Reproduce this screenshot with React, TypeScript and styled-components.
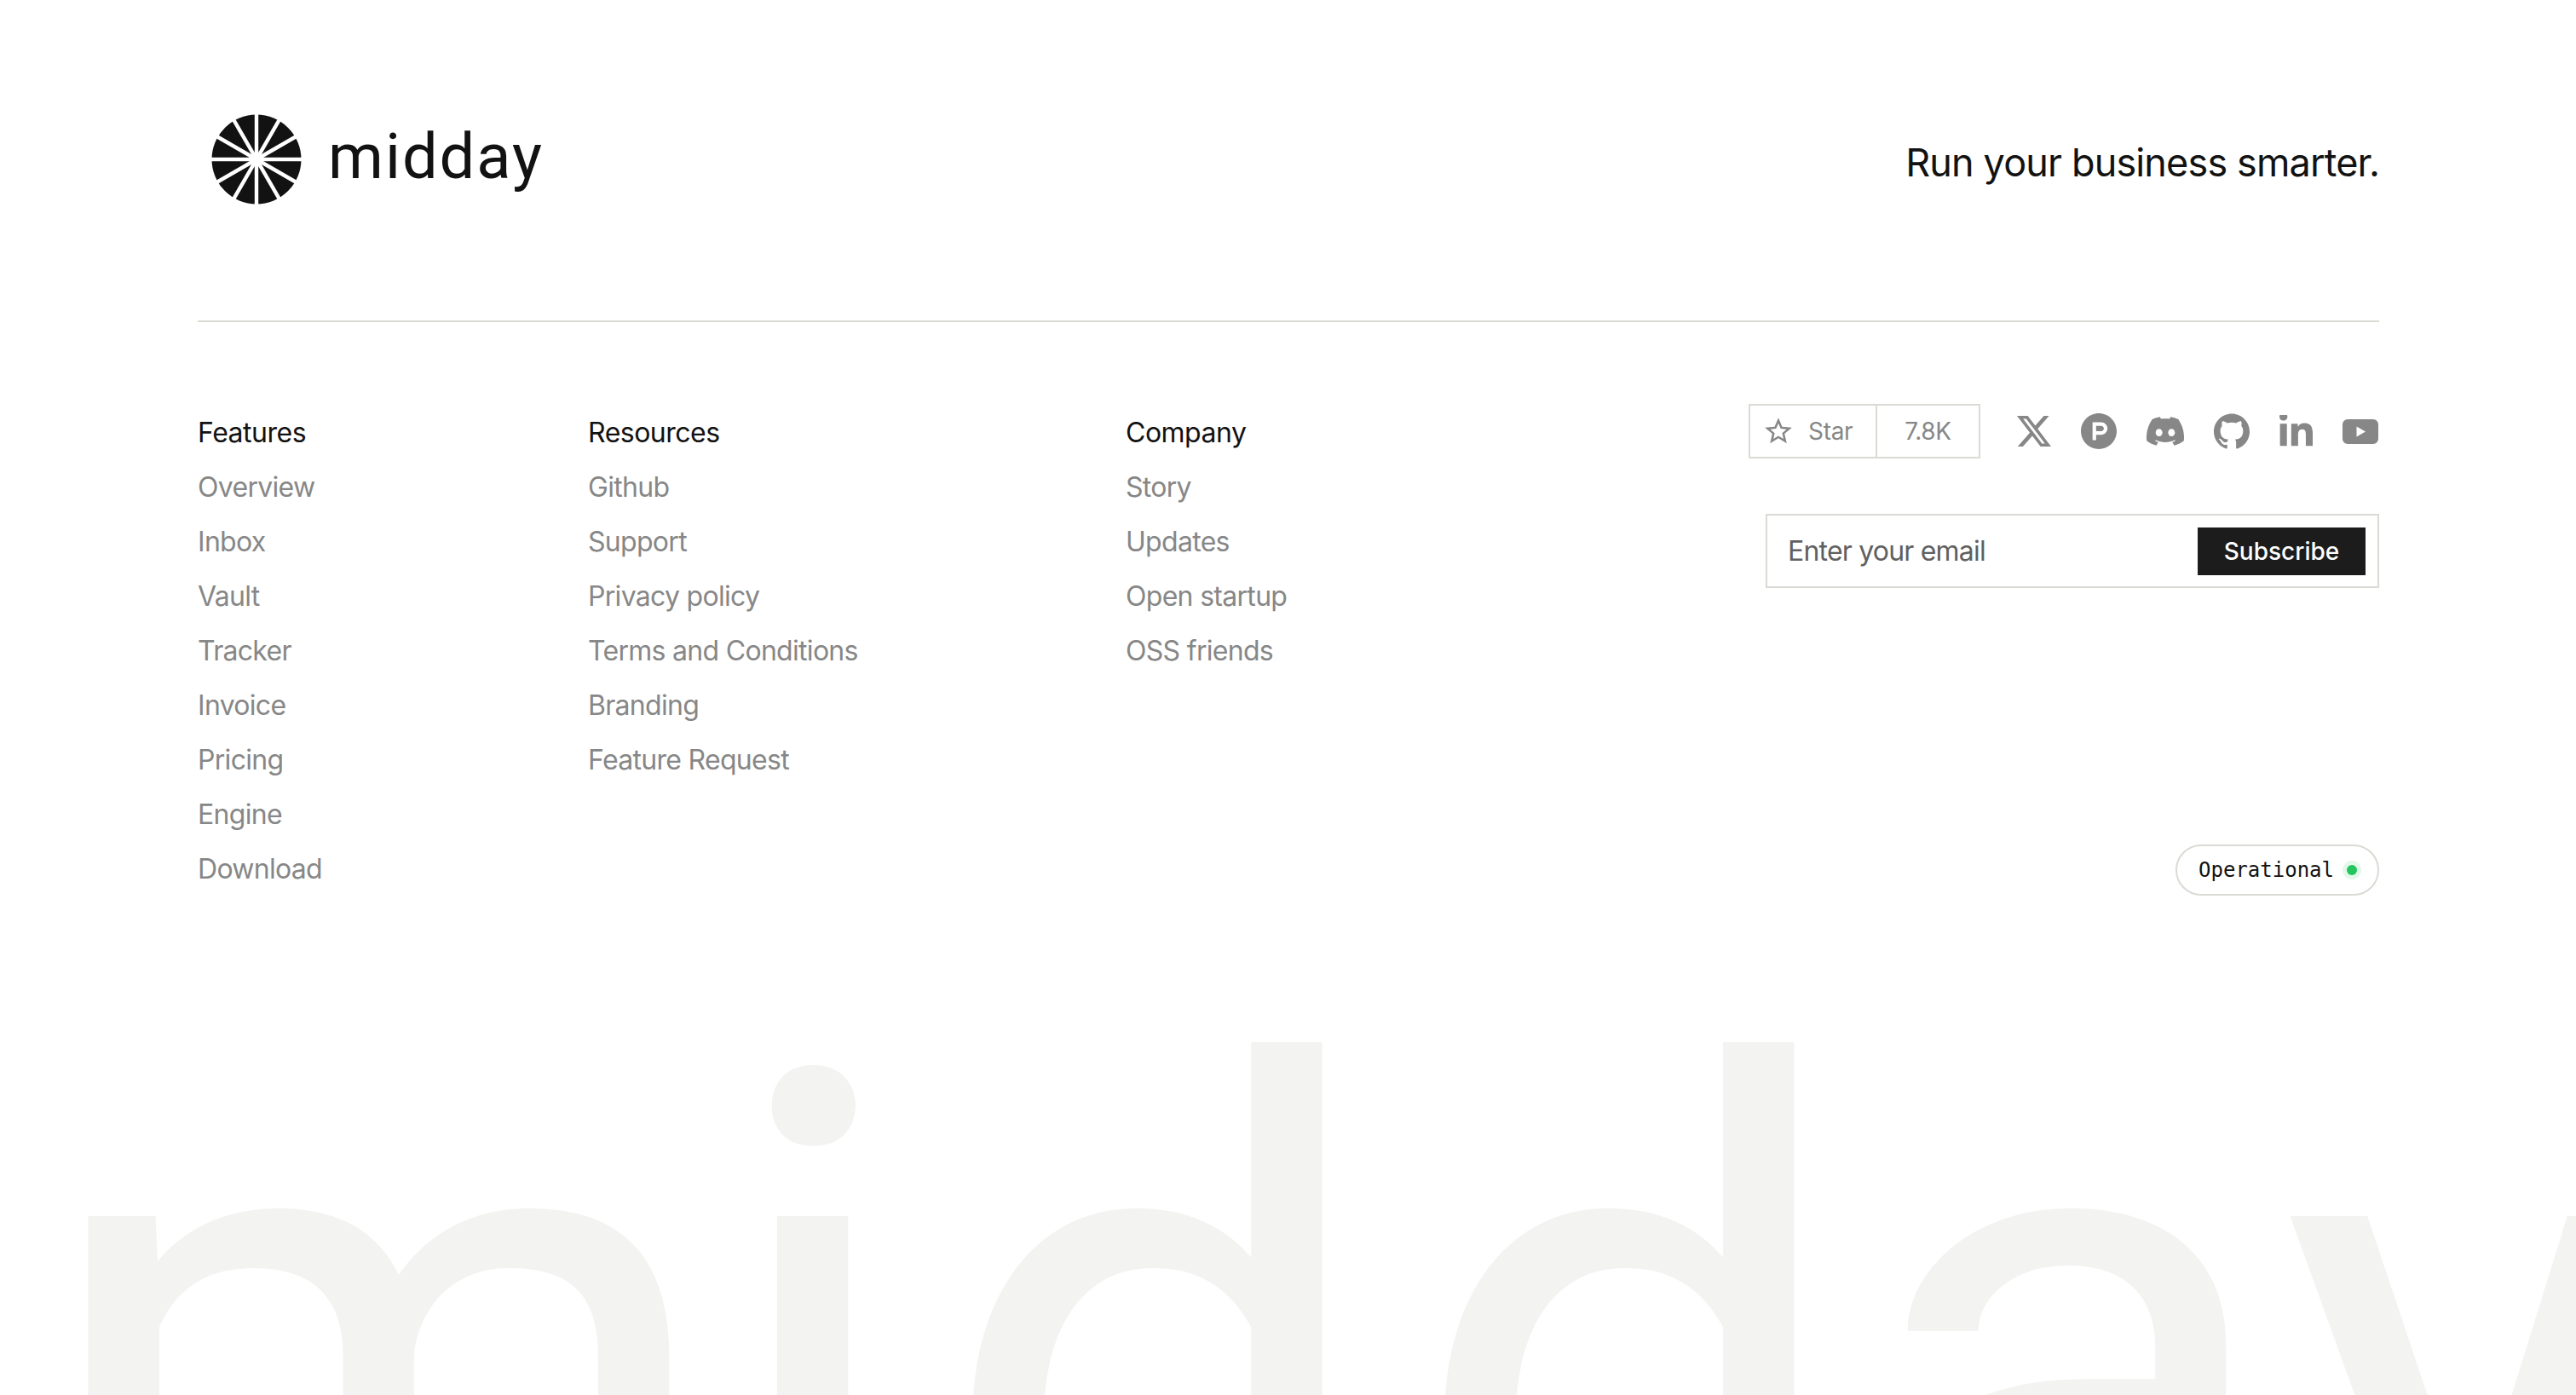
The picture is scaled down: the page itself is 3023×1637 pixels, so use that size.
import React from 'react';
import styled, { createGlobalStyle } from 'styled-components';
import { FaLinkedinIn } from 'react-icons/fa6';
import { MdOutlineStarBorder } from 'react-icons/md';
import { SiDiscord, SiGithub, SiProducthunt, SiX } from 'react-icons/si';

const GlobalStyle = createGlobalStyle`
  * {
    box-sizing: border-box;
  }

  html,
  body {
    margin: 0;
    height: 100%;
    background: #fff;
  }

  body {
    font-family: Inter, 'Liberation Sans', sans-serif;
    color: #121212;
    overflow: hidden;
  }
`;

const columns = [
  {
    title: 'Features',
    width: 458,
    links: ['Overview', 'Inbox', 'Vault', 'Tracker', 'Invoice', 'Pricing', 'Engine', 'Download'],
  },
  {
    title: 'Resources',
    width: 631,
    links: ['Github', 'Support', 'Privacy policy', 'Terms and Conditions', 'Branding', 'Feature Request'],
  },
  {
    title: 'Company',
    width: 400,
    links: ['Story', 'Updates', 'Open startup', 'OSS friends'],
  },
];

const spokes = [0, 30, 60, 90, 120, 150];

// hand kerning so the stems of the giant word land where they should
const wordmarkLetters = [
  { letter: 'm', kern: -6 },
  { letter: 'i', kern: 33 },
  { letter: 'd', kern: 35 },
  { letter: 'd', kern: 8 },
  { letter: 'a', kern: -2 },
  { letter: 'y', kern: 0 },
];

function Logo() {
  return (
    <LogoMark viewBox="0 0 106 106" aria-hidden="true">
      <circle cx="53" cy="53" r="52.5" fill="#121212" />
      {spokes.map((angle) => (
        <line
          key={angle}
          x1="53"
          y1="-2"
          x2="53"
          y2="108"
          stroke="#fff"
          strokeWidth="4.4"
          transform={`rotate(${angle} 53 53)`}
        />
      ))}
    </LogoMark>
  );
}

function YoutubeIcon() {
  return (
    <svg width="42" height="29" viewBox="0 0 42 29" fill="currentColor" aria-hidden="true">
      <path
        fillRule="evenodd"
        d="M6 0h30a6 6 0 0 1 6 6v17a6 6 0 0 1-6 6H6a6 6 0 0 1-6-6V6a6 6 0 0 1 6-6ZM16.500 8.500v12l10.500-6Z"
      />
    </svg>
  );
}

export default function App() {
  return (
    <Page>
      <GlobalStyle />
      <Footer>
        <TopRow>
          <Brand>
            <Logo />
            <BrandName>midday</BrandName>
          </Brand>
          <Tagline>Run your business smarter.</Tagline>
        </TopRow>

        <MainRow>
          <Nav>
            {columns.map((column) => (
              <Column key={column.title} $width={column.width}>
                <ColumnTitle>{column.title}</ColumnTitle>
                {column.links.map((link) => (
                  <ColumnLink key={link}>{link}</ColumnLink>
                ))}
              </Column>
            ))}
          </Nav>

          <Side>
            <SideTop>
              <SocialRow>
                <StarWidget>
                  <StarButton>
                    <MdOutlineStarBorder size={38} />
                    Star
                  </StarButton>
                  <StarCount>7.8K</StarCount>
                </StarWidget>
                <Socials>
                  <SiX size={40} />
                  <SiProducthunt size={42} />
                  <SiDiscord size={44} />
                  <SiGithub size={42} />
                  <FaLinkedinIn size={39} viewBox="0 32 448 448" />
                  <YoutubeIcon />
                </Socials>
              </SocialRow>
              <EmailForm>
                <EmailPlaceholder>Enter your email</EmailPlaceholder>
                <SubscribeButton>Subscribe</SubscribeButton>
              </EmailForm>
            </SideTop>
            <StatusPill>
              Operational
              <StatusDot />
            </StatusPill>
          </Side>
        </MainRow>
      </Footer>
      <Wordmark>
        {wordmarkLetters.map((item, index) => (
          <WordmarkLetter key={index} $kern={item.kern}>
            {item.letter}
          </WordmarkLetter>
        ))}
      </Wordmark>
    </Page>
  );
}

const Page = styled.div`
  height: 1637px;
  overflow: hidden;
`;

const Footer = styled.footer`
  padding: 0 231px 0 232px;
`;

const TopRow = styled.div`
  display: flex;
  align-items: center;
  justify-content: space-between;
  padding: 134px 0 136px;
  border-bottom: 2px solid #dcdad5;
`;

const Brand = styled.div`
  display: flex;
  align-items: center;
  gap: 31px;
  padding-left: 16px;
`;

const LogoMark = styled.svg`
  width: 106px;
  height: 106px;
  display: block;
`;

const BrandName = styled.span`
  font-family: Roboto, sans-serif;
  font-size: 74px;
  line-height: 1;
  letter-spacing: 2px;
  padding-bottom: 6px;
`;

const Tagline = styled.div`
  font-size: 45px;
  line-height: 1;
  letter-spacing: -0.85px;
  padding-top: 6px;
`;

const MainRow = styled.div`
  display: flex;
  justify-content: space-between;
  padding-top: 96px;
`;

const Nav = styled.nav`
  display: flex;
  padding-top: 2px;
`;

const Column = styled.div<{ $width: number }>`
  width: ${(p) => p.$width}px;
  display: flex;
  flex-direction: column;
`;

const ColumnTitle = styled.div`
  font-size: 32px;
  line-height: 64px;
  letter-spacing: -0.5px;
  color: #121212;
`;

const ColumnLink = styled.a`
  font-size: 32px;
  line-height: 64px;
  letter-spacing: -0.7px;
  color: #878787;
`;

const Side = styled.div`
  display: flex;
  flex-direction: column;
  justify-content: space-between;
  align-items: flex-end;
  height: 577px;
`;

const SideTop = styled.div`
  display: flex;
  flex-direction: column;
  align-items: flex-end;
  gap: 65px;
`;

const SocialRow = styled.div`
  display: flex;
  align-items: center;
  gap: 43px;
  padding-right: 1px;
`;

const StarWidget = styled.div`
  display: flex;
  height: 64px;
  border: 2px solid #dcdad5;
  font-size: 28px;
  letter-spacing: -0.3px;
  color: #878787;
`;

const StarButton = styled.div`
  width: 149px;
  display: flex;
  align-items: center;
  gap: 16px;
  padding-left: 14px;
  border-right: 2px solid #dcdad5;
`;

const StarCount = styled.div`
  width: 119px;
  display: flex;
  align-items: center;
  justify-content: center;
`;

const Socials = styled.div`
  display: flex;
  align-items: center;
  gap: 35px;
  color: #878787;
`;

const EmailForm = styled.div`
  width: 720px;
  height: 87px;
  display: flex;
  align-items: center;
  justify-content: space-between;
  padding: 0 14px 0 24px;
  border: 2px solid #dcdad5;
`;

const EmailPlaceholder = styled.span`
  font-size: 32px;
  letter-spacing: -0.8px;
  color: #606060;
`;

const SubscribeButton = styled.button`
  width: 197px;
  height: 56px;
  border: 0;
  background: #1c1c1c;
  color: #fff;
  font-family: inherit;
  font-size: 28px;
  font-weight: 500;
`;

const StatusPill = styled.div`
  height: 60px;
  display: flex;
  align-items: center;
  gap: 15px;
  padding: 0 24px 0 25px;
  border: 2px solid #dcdad5;
  border-radius: 30px;
  font-family: 'DejaVu Sans Mono', monospace;
  font-size: 24px;
  color: #121212;
`;

const StatusDot = styled.span`
  width: 12px;
  height: 12px;
  border-radius: 50%;
  background: #22c55e;
  box-shadow: 0 0 0 5px #e3f7ea;
`;

const Wordmark = styled.div`
  margin-top: 87px;
  padding-left: 41px;
  font-family: Roboto, sans-serif;
  font-size: 920px;
  line-height: 1;
  color: #f3f3f1;
  white-space: nowrap;
`;

const WordmarkLetter = styled.span<{ $kern: number }>`
  margin-right: ${(p) => p.$kern}px;
`;
